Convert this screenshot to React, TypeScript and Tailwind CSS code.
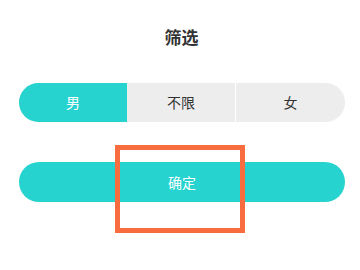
export default function App() {
  const font = { fontFamily: '"Noto Sans CJK SC", "Noto Sans", sans-serif' };
  return (
    <div className="relative w-[360px] h-[270px] bg-white overflow-hidden" style={font}>
      <div className="pt-[24px] flex justify-center">
        <div className="text-[17px] leading-[26px] font-bold text-[#333333] pl-[3px]">筛选</div>
      </div>
      <div className="ml-[19px] w-[326px] mt-[33px] flex h-[39px] rounded-full overflow-hidden bg-[#ededed]">
        <div className="w-[108px] bg-[#26d3cf] flex items-center justify-center text-white text-[14px]">男</div>
        <div className="w-[109px] flex items-center justify-center text-[#333333] text-[14px] border-r border-white">不限</div>
        <div className="flex-1 flex items-center justify-center text-[#333333] text-[14px]">女</div>
      </div>
      <div className="ml-[19px] w-[326px] mt-[40px] h-[40px] rounded-full bg-[#26d3cf] flex items-center justify-center text-white text-[14px]">
        确定
      </div>
      <div className="absolute left-[115px] top-[145px] w-[130px] h-[88px] border-[5px] border-[#f76d40]" />
    </div>
  );
}
